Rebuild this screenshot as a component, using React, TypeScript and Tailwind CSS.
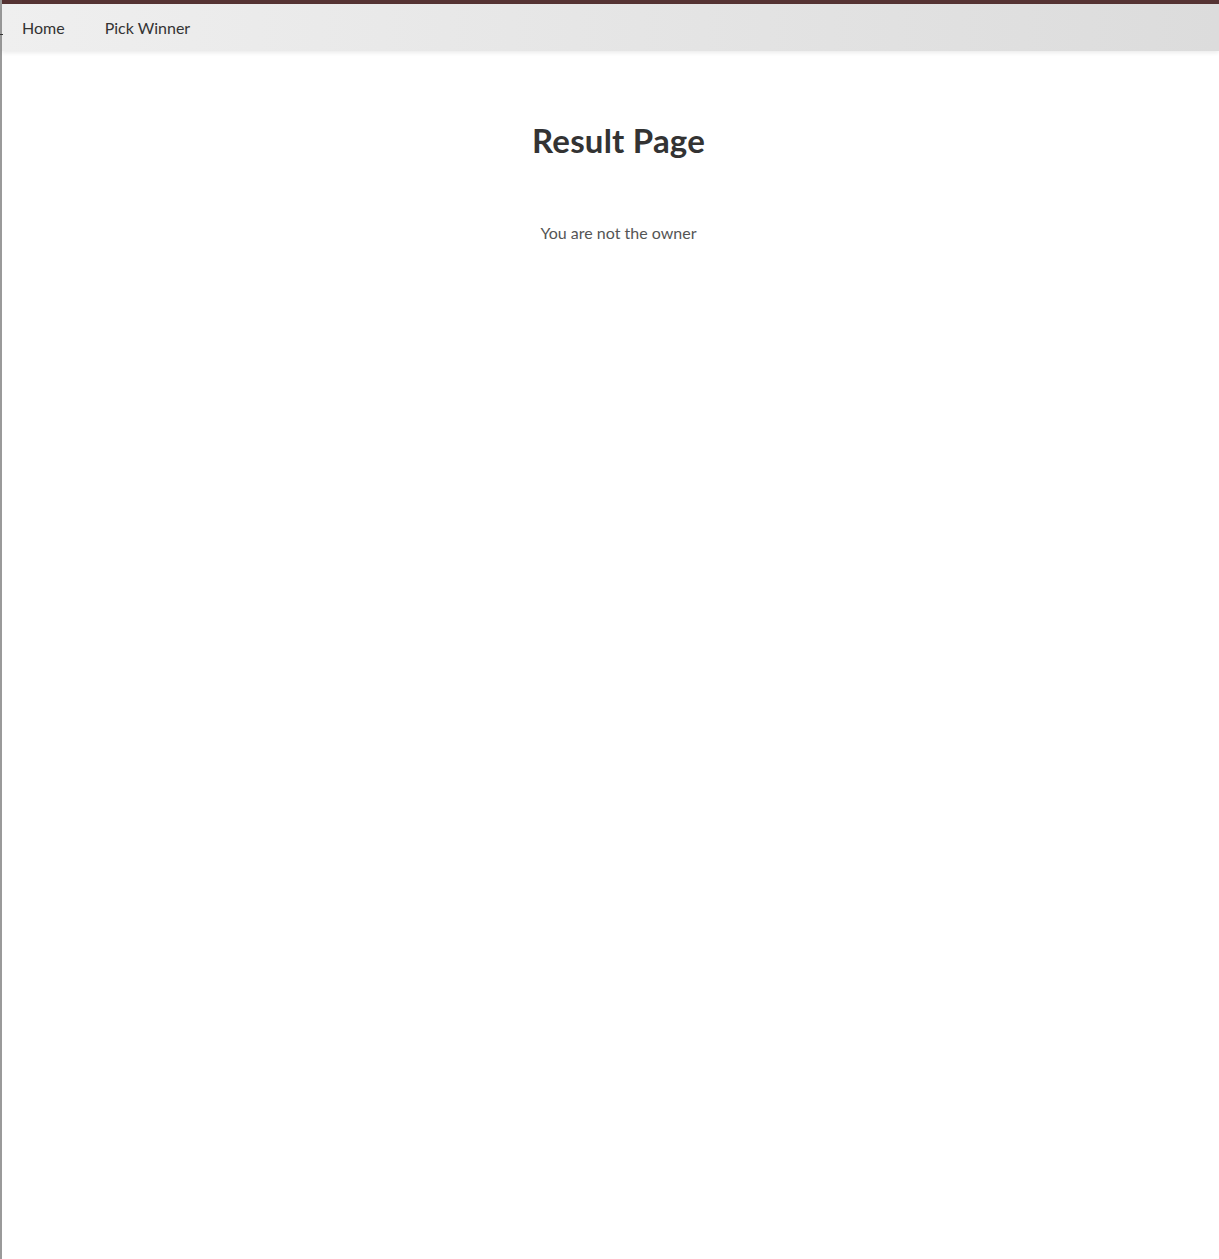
import React from "react";

export default function App() {
  return (
    <div
      className="min-h-[1259px] bg-white border-l-2 border-[#9a9a9a] relative"
      style={{ fontFamily: '"Lato", "Noto Sans", sans-serif' }}
    >
      <div className="h-[4px] bg-[#553333]" />
      <nav className="h-[47px] flex items-center bg-gradient-to-r from-[#efefef] to-[#dcdcdc] shadow-[0_2px_4px_rgba(0,0,0,0.08)] text-[16px] text-[#333]">
        <a className="ml-[20px]">Home</a>
        <a className="ml-[40px]">Pick Winner</a>
      </nav>
      <div className="absolute left-[-2px] top-[34px] w-[3px] h-[1px] bg-[#333]" />
      <main className="pl-[16px] flex flex-col items-center">
        <h1 className="mt-[69px] text-[33px] font-bold text-[#333] leading-[40px] tracking-[0.2px]">Result Page</h1>
        <p className="mt-[61px] text-[16px] text-[#555] leading-[24px]">You are not the owner</p>
      </main>
    </div>
  );
}
